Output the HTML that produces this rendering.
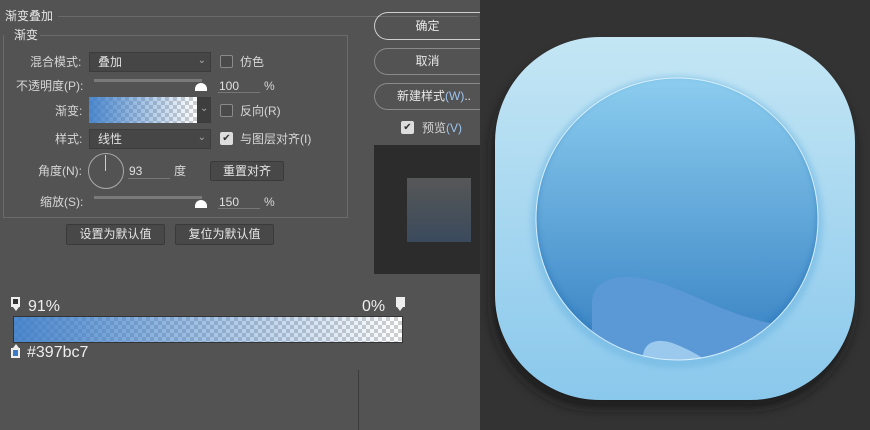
<!DOCTYPE html>
<html><head><meta charset="utf-8"><style>
*{margin:0;padding:0;box-sizing:border-box}
body{width:870px;height:430px;overflow:hidden;background:#535353;position:relative;font-family:"Liberation Sans","Noto Sans CJK SC",sans-serif;color:#d6d6d6;font-size:12px}
.a{position:absolute}
.t{position:absolute;white-space:nowrap;line-height:14px}
.dd{position:absolute;background:#464646;border:1px solid #3c3c3c;color:#e0e0e0}
.cb{position:absolute;width:13px;height:13px;border:1px solid #8a8a8a;border-radius:2px;background:#4a4a4a}
.btn{position:absolute;border:1px solid #3a3a3a;background:#484848;color:#e6e6e6;text-align:center;border-radius:2px}
.pill{position:absolute;border:1px solid #8a8a8a;border-right:none;border-radius:14px 0 0 14px;text-align:center;color:#e8e8e8;font-size:12px}
.chk{background:repeating-conic-gradient(#cfcfcf 0 25%,#fff 0 50%) 0 0/8px 8px}
</style></head><body>
<div class="t" style="left:5px;top:9px;color:#e6e6e6">渐变叠加</div>
<div class="a" style="left:58px;top:16px;width:420px;height:1px;background:#6a6a6a"></div>
<div class="a" style="left:3px;top:35px;width:345px;height:183px;border:1px solid #6a6a6a;border-top:none"></div>
<div class="a" style="left:40px;top:35px;width:308px;height:1px;background:#6a6a6a"></div>
<div class="t" style="left:14px;top:28px;color:#e6e6e6">渐变</div>

<div class="t" style="left:30px;top:55px">混合模式:</div>
<div class="dd" style="left:89px;top:52px;width:122px;height:20px"><span class="t" style="left:8px;top:2px">叠加</span><span class="t" style="right:4px;top:1px;font-size:10px;color:#aaa">⌄</span></div>
<div class="cb" style="left:220px;top:55px"></div><div class="t" style="left:240px;top:55px">仿色</div>

<div class="t" style="left:16px;top:79px">不透明度(P):</div>
<div class="a" style="left:94px;top:79px;width:108px;height:3px;background:#7a7a7a"></div>
<div class="a" style="left:195px;top:83px;width:12px;height:8px;background:#fff;border-radius:6px 6px 0 0"></div>
<div class="t" style="left:219px;top:79px;color:#e0e0e0">100</div>
<div class="a" style="left:218px;top:92px;width:42px;height:1px;background:#777"></div>
<div class="t" style="left:264px;top:79px">%</div>

<div class="t" style="left:55px;top:104px">渐变:</div>
<div class="a chk" style="left:89px;top:97px;width:108px;height:26px"><div class="a" style="inset:0;background:linear-gradient(90deg,rgba(57,123,199,.9),rgba(57,123,199,0))"></div></div>
<div class="dd" style="left:197px;top:97px;width:14px;height:26px;background:#3e3e3e"><span class="t" style="left:2px;top:4px;font-size:10px;color:#aaa">⌄</span></div>
<div class="cb" style="left:220px;top:104px"></div><div class="t" style="left:240px;top:104px">反向(R)</div>

<div class="t" style="left:55px;top:132px">样式:</div>
<div class="dd" style="left:89px;top:129px;width:122px;height:20px"><span class="t" style="left:8px;top:2px">线性</span><span class="t" style="right:4px;top:1px;font-size:10px;color:#aaa">⌄</span></div>
<div class="cb" style="left:220px;top:132px;background:#ddd;border-color:#ddd;color:#333;font-size:10px;line-height:11px;text-align:center">✔</div>
<div class="t" style="left:240px;top:132px">与图层对齐(I)</div>

<div class="t" style="left:38px;top:164px">角度(N):</div>
<div class="a" style="left:88px;top:153px;width:36px;height:36px;border:1px solid #aaa;border-radius:50%"></div>
<div class="a" style="left:105px;top:155px;width:1px;height:16px;background:#ccc"></div>
<div class="t" style="left:129px;top:164px;color:#e0e0e0">93</div>
<div class="a" style="left:128px;top:178px;width:42px;height:1px;background:#777"></div>
<div class="t" style="left:174px;top:164px">度</div>
<div class="btn" style="left:210px;top:161px;width:74px;height:20px;line-height:18px">重置对齐</div>

<div class="t" style="left:40px;top:195px">缩放(S):</div>
<div class="a" style="left:94px;top:196px;width:108px;height:3px;background:#7a7a7a"></div>
<div class="a" style="left:195px;top:200px;width:12px;height:8px;background:#fff;border-radius:6px 6px 0 0"></div>
<div class="t" style="left:219px;top:195px;color:#e0e0e0">150</div>
<div class="a" style="left:218px;top:208px;width:42px;height:1px;background:#777"></div>
<div class="t" style="left:264px;top:195px">%</div>

<div class="btn" style="left:66px;top:224px;width:99px;height:21px;line-height:19px">设置为默认值</div>
<div class="btn" style="left:175px;top:224px;width:99px;height:21px;line-height:19px">复位为默认值</div>

<div class="pill" style="left:374px;top:12px;width:106px;height:28px;line-height:26px;border-color:#cfcfcf">确定</div>
<div class="pill" style="left:374px;top:48px;width:106px;height:27px;line-height:25px">取消</div>
<div class="pill" style="left:374px;top:83px;width:106px;height:27px;line-height:25px;text-align:left;padding-left:22px">新建样式<span style="color:#9bc4ef">(W)</span>..</div>
<div class="cb" style="left:401px;top:121px;background:#ddd;border-color:#ddd;color:#333;font-size:10px;line-height:11px;text-align:center">✔</div>
<div class="t" style="left:422px;top:121px">预览<span style="color:#9bc4ef">(V)</span></div>
<div class="a" style="left:374px;top:145px;width:106px;height:129px;background:#2c2c2c"></div>
<div class="a" style="left:407px;top:178px;width:64px;height:64px;background:linear-gradient(#575757,#3a4a5c)"></div>

<div class="a" style="left:11px;top:297px;width:9px;height:10px;background:#eee;border:2px solid #eee;"><div style="width:5px;height:5px;background:#333"></div></div>
<div class="a" style="left:13px;top:307px;width:0;height:0;border-left:3px solid transparent;border-right:3px solid transparent;border-top:4px solid #eee"></div>
<div class="t" style="left:28px;top:298px;font-size:16px;line-height:18px;color:#eee">91%</div>
<div class="t" style="left:362px;top:298px;font-size:16px;line-height:18px;color:#eee">0%</div>
<div class="a" style="left:396px;top:297px;width:9px;height:10px;background:#eee"></div>
<div class="a" style="left:397px;top:307px;width:0;height:0;border-left:3px solid transparent;border-right:3px solid transparent;border-top:4px solid #eee"></div>
<div class="a chk" style="left:13px;top:316px;width:390px;height:27px;border:1px solid #333"><div class="a" style="inset:0;background:linear-gradient(90deg,rgba(57,123,199,.9),rgba(57,123,199,0))"></div></div>
<div class="a" style="left:13px;top:344px;width:0;height:0;border-left:3px solid transparent;border-right:3px solid transparent;border-bottom:4px solid #eee"></div>
<div class="a" style="left:11px;top:348px;width:9px;height:10px;background:#eee;padding:2px"><div style="width:5px;height:6px;background:#397bc7"></div></div>
<div class="t" style="left:27px;top:344px;font-size:16px;line-height:18px;color:#eee">#397bc7</div>
<div class="a" style="left:358px;top:370px;width:1px;height:60px;background:#3a3a3a"></div>

<div class="a" style="left:480px;top:0;width:390px;height:430px;background:#333"></div>
<svg class="a" style="left:480px;top:0" width="390" height="430" viewBox="480 0 390 430">
<defs>
<linearGradient id="fr" x1="0" y1="0" x2="0" y2="1"><stop offset="0" stop-color="#c4e6f4"/><stop offset="1" stop-color="#8ac8ec"/></linearGradient>
<linearGradient id="ci" x1="0" y1="0" x2="0" y2="1"><stop offset="0" stop-color="#8ccdef"/><stop offset="1" stop-color="#3580c2"/></linearGradient>
<filter id="sh" x="-20%" y="-20%" width="140%" height="150%"><feGaussianBlur stdDeviation="6"/></filter>
<filter id="bl" x="-20%" y="-20%" width="140%" height="140%"><feGaussianBlur stdDeviation="3"/></filter>
<clipPath id="cc"><circle cx="677" cy="219" r="141"/></clipPath>
</defs>
<rect x="492" y="48" width="362" height="360" rx="105" fill="#151515" opacity=".8" filter="url(#sh)"/>
<rect x="495" y="37" width="360" height="363" rx="105" fill="url(#fr)"/>
<circle cx="677" cy="222" r="146" fill="#6fb6e2" opacity=".55" filter="url(#bl)"/>
<circle cx="677" cy="219" r="141" fill="url(#ci)"/>
<g clip-path="url(#cc)">
<circle cx="677" cy="215" r="143" fill="none" stroke="#2f78be" stroke-width="6" opacity=".6" filter="url(#bl)"/>
<path d="M592 300 C595 280 615 274 640 278 C680 284 720 315 780 325 L820 330 L820 380 L592 380 Z" fill="#5a98d6"/>
<path d="M643 355 C645 340 660 338 675 344 C690 350 700 356 705 360 L705 380 L643 380 Z" fill="#9bc9ee"/>
</g>
<circle cx="677" cy="219" r="141" fill="none" stroke="#d6effb" stroke-width="1"/>
</svg>
</body></html>
